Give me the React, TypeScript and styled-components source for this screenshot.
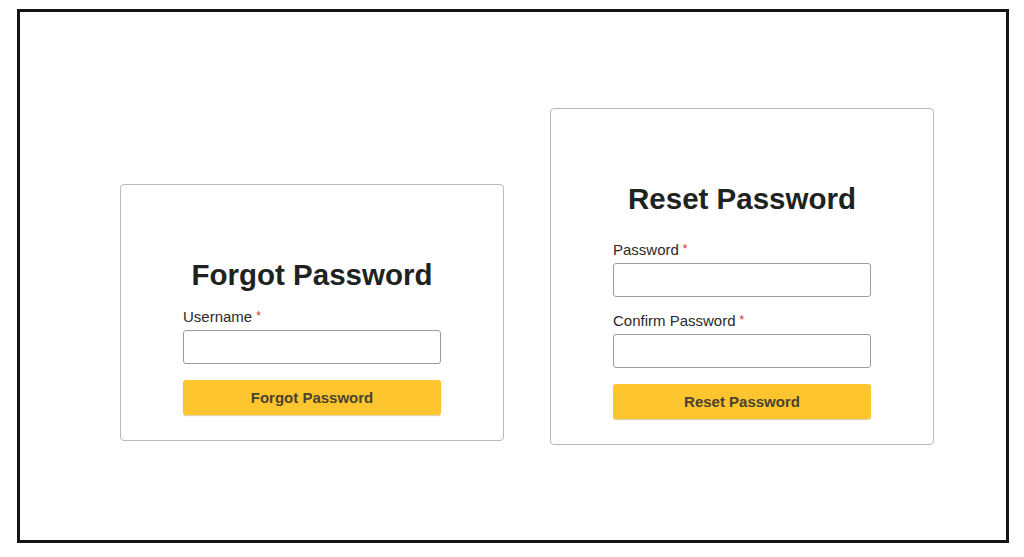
import React from 'react';
import styled, { createGlobalStyle } from 'styled-components';

const GlobalStyle = createGlobalStyle`
  * { box-sizing: border-box; }
  html, body {
    margin: 0;
    padding: 0;
    background: #ffffff;
    font-family: "Liberation Sans", Arial, sans-serif;
  }
`;

const Page = styled.div`
  width: 1024px;
  height: 557px;
  padding: 9px 15px 14px 17px;
`;

const Frame = styled.div`
  width: 992px;
  height: 534px;
  border: 3px solid #141414;
  display: flex;
  align-items: flex-start;
  gap: 46px;
  padding: 96px 0 0 100px;
`;

const Card = styled.div<{ $offset?: number }>`
  width: 384px;
  margin-top: ${p => p.$offset || 0}px;
  border: 1px solid #b9b9b9;
  border-radius: 4px;
  padding: 73px 62px 25px;
  display: flex;
  flex-direction: column;
`;

const Title = styled.h1<{ $gap: number }>`
  margin: 0 0 ${p => p.$gap}px;
  font-size: 29.5px;
  line-height: 34px;
  font-weight: bold;
  text-align: center;
  color: #1e2320;
`;

const Field = styled.div`
  display: flex;
  flex-direction: column;
  margin-bottom: 15px;

  &:last-of-type {
    margin-bottom: 16px;
  }
`;

const Label = styled.label`
  font-size: 15px;
  line-height: 17px;
  color: #2a2a2a;
  margin-bottom: 5px;
`;

const Star = styled.span`
  color: #d62a2a;
  font-size: 12px;
  margin-left: 4px;
  vertical-align: top;
`;

const Input = styled.input`
  width: 258px;
  height: 34px;
  border: 1px solid #9c9c9c;
  border-radius: 3px;
  background: #ffffff;
  outline: none;
  font-size: 15px;
  padding: 0 8px;
`;

const Button = styled.button`
  width: 258px;
  height: 35px;
  border: none;
  border-radius: 3px;
  background: #fec52e;
  box-shadow: 0 1px 1px rgba(160, 110, 0, 0.35);
  color: #4a4330;
  font-family: "Liberation Sans", Arial, sans-serif;
  font-size: 15px;
  font-weight: bold;
  cursor: pointer;
`;

const FormField = ({ label }: { label: string }) => (
  <Field>
    <Label>
      {label}
      <Star>*</Star>
    </Label>
    <Input type={label.includes('Password') ? 'password' : 'text'} />
  </Field>
);

const App = () => {
  return (
    <>
      <GlobalStyle />
      <Page>
        <Frame>
          <Card $offset={76}>
            <Title $gap={16}>Forgot Password</Title>
            <FormField label="Username" />
            <Button>Forgot Password</Button>
          </Card>
          <Card>
            <Title $gap={25}>Reset Password</Title>
            <FormField label="Password" />
            <FormField label="Confirm Password" />
            <Button>Reset Password</Button>
          </Card>
        </Frame>
      </Page>
    </>
  );
};

export default App;
